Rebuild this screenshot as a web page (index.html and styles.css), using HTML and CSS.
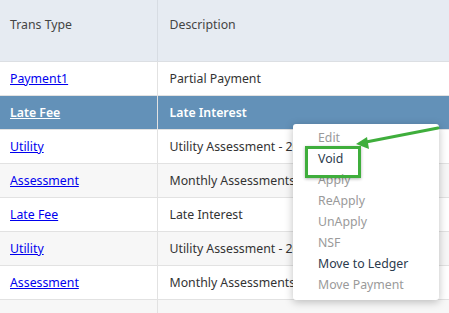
FILE: index.html
```html
<!DOCTYPE html>
<html lang="en">
<head>
    <meta charset="UTF-8">
    <title>Transactions</title>
    <link rel="stylesheet" href="styles.css">
</head>
<body>
    <div class="grid-wrap">
        <table class="trans-table">
            <thead>
                <tr>
                    <th class="col-type">Trans Type</th>
                    <th class="col-desc">Description</th>
                </tr>
            </thead>
            <tbody>
                <tr><td class="col-type"><a href="#">Payment1</a></td><td class="col-desc">Partial Payment</td></tr>
                <tr class="selected"><td class="col-type"><a href="#">Late Fee</a></td><td class="col-desc">Late Interest</td></tr>
                <tr><td class="col-type"><a href="#">Utility</a></td><td class="col-desc">Utility Assessment - 2023</td></tr>
                <tr class="alt"><td class="col-type"><a href="#">Assessment</a></td><td class="col-desc">Monthly Assessments</td></tr>
                <tr><td class="col-type"><a href="#">Late Fee</a></td><td class="col-desc">Late Interest</td></tr>
                <tr class="alt"><td class="col-type"><a href="#">Utility</a></td><td class="col-desc">Utility Assessment - 2023</td></tr>
                <tr><td class="col-type"><a href="#">Assessment</a></td><td class="col-desc">Monthly Assessments</td></tr>
                <tr class="alt"><td class="col-type"></td><td class="col-desc"></td></tr>
            </tbody>
        </table>

        <!-- context menu for the selected row -->
        <ul class="context-menu">
            <li class="disabled">Edit</li>
            <li class="highlight">Void</li>
            <li class="disabled">Apply</li>
            <li class="disabled">ReApply</li>
            <li class="disabled">UnApply</li>
            <li class="disabled">NSF</li>
            <li>Move to Ledger</li>
            <li class="disabled">Move Payment</li>
        </ul>

        <svg class="callout-arrow" width="100" height="40" viewBox="0 0 100 40">
            <line x1="92" y1="10" x2="20" y2="24" stroke="#3fae3c" stroke-width="3" stroke-linecap="round"/>
            <polygon points="10,26 21,19 23,31" fill="#3fae3c"/>
        </svg>
    </div>
</body>
</html>
```

FILE: styles.css
```css
* {
    box-sizing: border-box;
}

body {
    margin: 0;
    background: #f7f7f7;
    font-family: 'Noto Sans', 'Open Sans', sans-serif;
    font-size: 12.3px;
    color: #333;
}

.grid-wrap {
    position: relative;
    width: 449px;
    height: 313px;
    overflow: hidden;
}

.trans-table {
    width: 100%;
    border-collapse: collapse;
    table-layout: fixed;
}

.trans-table th {
    height: 61px;
    padding-bottom: 12px;
    background: #e6ebf2;
    color: #444;
    font-weight: normal;
    text-align: left;
    border-bottom: 1px solid #dcdfe3;
}

.trans-table td {
    height: 34px;
    background: #fff;
    border-bottom: 1px solid #e2e2e2;
    white-space: nowrap;
    overflow: hidden;
}

.col-type {
    width: 157px;
    padding-left: 10px;
    border-right: 1px solid #e2e2e2;
}

th.col-type {
    border-right-color: #d7dce3;
}

.col-desc {
    padding-left: 12px;
}

.trans-table a {
    color: #0000ee;
}

.trans-table tr.alt td {
    background: #f7f7f7;
}

.trans-table tr.selected td {
    background: #6391b8;
    color: #fff;
    font-weight: 600;
}

.trans-table tr.selected a {
    color: #fff;
}

.context-menu {
    position: absolute;
    left: 293px;
    top: 124px;
    width: 146px;
    margin: 0;
    padding: 3px 0 5px;
    list-style: none;
    background: #fff;
    border-radius: 3px;
    box-shadow: 0 2px 8px rgba(0, 0, 0, 0.25);
}

.context-menu li {
    height: 21px;
    line-height: 21px;
    padding-left: 25px;
    color: #2c3b4d;
}

.context-menu li.disabled {
    color: #9a9a9a;
}

.context-menu li.highlight {
    position: relative;
}

.context-menu li.highlight::after {
    content: "";
    position: absolute;
    left: 12px;
    top: 0px;
    width: 50px;
    height: 26px;
    margin-top: -2px;
    border: 3px solid #3fae3c;
    box-shadow: 0 1px 3px rgba(0, 0, 0, 0.3);
}

.callout-arrow {
    position: absolute;
    left: 346px;
    top: 118px;
}
```
